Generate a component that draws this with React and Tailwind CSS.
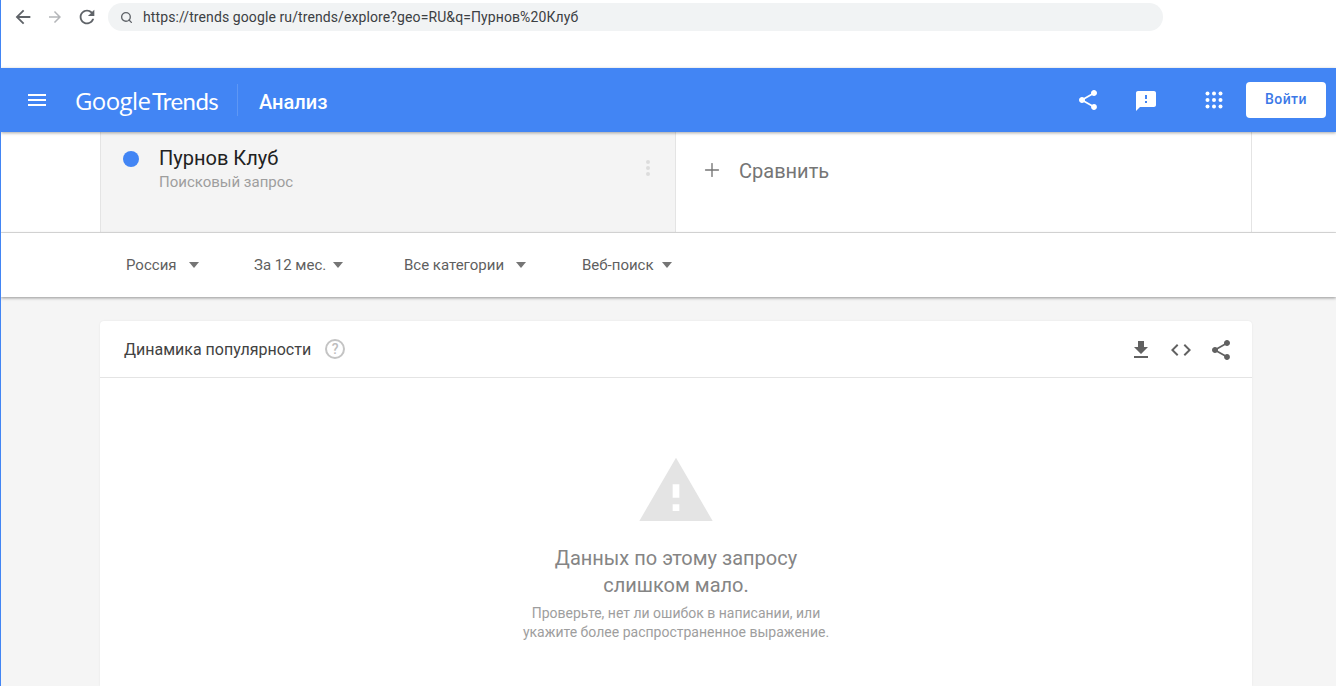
import { Search, Plus } from 'lucide-react'

const FILTERS = [
  { label: 'Россия', width: 'w-[128px]', gap: 'gap-[12px]' },
  { label: 'За 12 мес.', width: 'w-[150px]', gap: 'gap-[7px]' },
  { label: 'Все категории', width: 'w-[178px]', gap: 'gap-[12px]' },
  { label: 'Веб-поиск', width: 'w-[100px]', gap: 'gap-[8px]' },
]

function ShareIcon({ className }) {
  return (
    <svg viewBox="0 0 24 24" className={className} fill="currentColor">
      <path d="M18 16.08c-.76 0-1.44.3-1.96.77L8.91 12.7c.05-.23.09-.46.09-.7s-.04-.47-.09-.7l7.05-4.11c.54.5 1.25.81 2.04.81 1.66 0 3-1.34 3-3s-1.34-3-3-3-3 1.34-3 3c0 .24.04.47.09.7L8.04 9.81C7.5 9.31 6.79 9 6 9c-1.66 0-3 1.34-3 3s1.34 3 3 3c.79 0 1.5-.31 2.04-.81l7.12 4.16c-.05.21-.08.43-.08.65 0 1.61 1.31 2.92 2.92 2.92s2.92-1.31 2.92-2.92-1.31-2.92-2.92-2.92z" />
    </svg>
  )
}

function Caret() {
  return <span className="w-0 h-0 border-x-[5.5px] border-x-transparent border-t-[6px] border-t-[#757575]" />
}

function BrowserBar() {
  return (
    <div className="h-[68px] bg-white pl-[11px] pt-[3px] pr-[173px]">
      <div className="h-[28px] flex items-center">
        <svg viewBox="0 0 24 24" className="w-[22px] h-[22px] text-[#5f6368]" fill="currentColor">
          <path d="M20 11H7.83l5.59-5.59L12 4l-8 8 8 8 1.41-1.41L7.83 13H20v-2z" />
        </svg>
        <svg viewBox="0 0 24 24" className="ml-[12px] w-[18px] h-[18px] text-[#b4b6b9]" fill="currentColor">
          <path d="M12 4l-1.41 1.41L16.17 11H4v2h12.17l-5.58 5.59L12 20l8-8z" />
        </svg>
        <svg viewBox="0 0 24 24" className="ml-[12px] w-[22px] h-[22px] text-[#5f6368]" fill="currentColor">
          <path d="M17.65 6.35C16.2 4.9 14.21 4 12 4c-4.42 0-7.99 3.58-7.99 8s3.57 8 7.99 8c3.73 0 6.84-2.55 7.73-6h-2.08c-.82 2.33-3.04 4-5.65 4-3.31 0-6-2.69-6-6s2.69-6 6-6c1.66 0 3.14.69 4.22 1.78L13 11h7V4l-2.35 2.35z" />
        </svg>
        <div className="ml-[10px] flex-1 h-[28px] rounded-full bg-[#f1f3f4] flex items-center pl-[12px]">
          <Search size={13} strokeWidth={2.5} className="text-[#5f6368]" />
          <span className="ml-[10px] text-[14px] text-[#3c4043] tracking-[0.1px]">
            https://trends google ru/trends/explore?geo=RU&amp;q=Пурнов%20Клуб
          </span>
        </div>
      </div>
    </div>
  )
}

function Header() {
  return (
    <header className="relative z-10 h-[64px] bg-[#4285f4] text-white flex items-center pl-[24px] pr-[10px] shadow-[0_1px_3px_rgba(0,0,0,0.35)]">
      <svg viewBox="0 0 24 24" className="w-[24px] h-[24px]" fill="currentColor">
        <path d="M3 18h18v-2H3v2zm0-5h18v-2H3v2zm0-7v2h18V6H3z" />
      </svg>
      <span className="ml-[26px] pt-[2px] text-[24px] leading-none tracking-[-0.025em] font-['Open_Sans',sans-serif] font-normal">
        Google <span className="ml-[-4px] font-['Lato',sans-serif] font-normal">Trends</span>
      </span>
      <div className="ml-[19px] w-px h-[32px] bg-white/15" />
      <span className="ml-[21px] pt-[4px] text-[20px] font-medium">Анализ</span>
      <ShareIcon className="ml-auto w-[24px] h-[24px]" />
      <svg viewBox="0 0 24 24" className="ml-[34px] mt-[1px] w-[24px] h-[24px]" fill="currentColor">
        <path d="M20 2H4c-1.1 0-2 .9-2 2v18l4-4h14c1.1 0 2-.9 2-2V4c0-1.1-.9-2-2-2zm-7 12h-2v-2h2v2zm0-4h-2V6h2v4z" />
      </svg>
      <svg viewBox="0 0 24 24" className="ml-[44px] w-[24px] h-[24px]" fill="currentColor">
        <circle cx="5.5" cy="5.5" r="2" />
        <circle cx="12" cy="5.5" r="2" />
        <circle cx="18.5" cy="5.5" r="2" />
        <circle cx="5.5" cy="12" r="2" />
        <circle cx="12" cy="12" r="2" />
        <circle cx="18.5" cy="12" r="2" />
        <circle cx="5.5" cy="18.5" r="2" />
        <circle cx="12" cy="18.5" r="2" />
        <circle cx="18.5" cy="18.5" r="2" />
      </svg>
      <button className="ml-[20px] w-[80px] h-[36px] pb-[2px] rounded-[4px] bg-white text-[#3b78e7] text-[14px] font-medium tracking-[0.03em]">
        Войти
      </button>
    </header>
  )
}

function CompareRow() {
  return (
    <div className="h-[101px] bg-white border-b border-[#e0e0e0] flex pl-[99px]">
      <div className="w-[576px] bg-[#f4f4f4] border-x border-[#e4e4e4] flex items-start pl-[22px] pr-[25px]">
        <span className="mt-[19px] w-[16px] h-[16px] rounded-full bg-[#4285f4]" />
        <div className="ml-[20px] mt-[13px] flex-1">
          <div className="text-[20px] leading-[26px] text-[#212121]">Пурнов Клуб</div>
          <div className="mt-[1px] text-[15px] leading-[20px] text-[#9e9e9e]">Поисковый запрос</div>
        </div>
        <div className="mt-[28px] flex flex-col gap-[2px]">
          <span className="w-[4px] h-[4px] rounded-full bg-[#dcdcdc]" />
          <span className="w-[4px] h-[4px] rounded-full bg-[#dcdcdc]" />
          <span className="w-[4px] h-[4px] rounded-full bg-[#dcdcdc]" />
        </div>
      </div>
      <div className="w-[576px] border-r border-[#e4e4e4] flex items-start pl-[25px] pt-[27px] text-[#757575]">
        <Plus size={22} strokeWidth={1.5} />
        <span className="ml-[16px] mt-[-1px] text-[20px] leading-[27px]">Сравнить</span>
      </div>
    </div>
  )
}

function FilterRow() {
  return (
    <div className="relative h-[64px] bg-white flex items-center pl-[125px] shadow-[0_1px_3px_rgba(0,0,0,0.4)]">
      {FILTERS.map((f) => (
        <div key={f.label} className={`${f.width} ${f.gap} flex items-center text-[15px] text-[#5f5f5f]`}>
          <span>{f.label}</span>
          <Caret />
        </div>
      ))}
    </div>
  )
}

function InterestCard() {
  return (
    <div className="mt-[24px] mx-[99px] w-[1152px] flex-1 bg-white rounded-t-[4px] shadow-[0_0_2px_rgba(0,0,0,0.08)]">
      <div className="h-[57px] border-b border-[#e4e4e4] flex items-center pl-[24px] pr-[19px]">
        <span className="pt-[2px] text-[16px] text-[#424242]">Динамика популярности</span>
        <span className="ml-[14px] w-[20px] h-[20px] rounded-full border-2 border-[#c4c4c4] text-[#bdbdbd] text-[14px] font-medium flex items-center justify-center">
          ?
        </span>
        <svg viewBox="0 0 24 24" className="ml-auto mt-[1px] w-[24px] h-[24px] text-[#616161]" fill="currentColor">
          <path d="M19 9h-4V3H9v6H5l7 7 7-7zM5 18v2h14v-2H5z" />
        </svg>
        <svg viewBox="0 0 24 24" className="ml-[16px] mt-[1px] w-[24px] h-[24px] text-[#616161]" fill="currentColor">
          <path d="M9.4 16.6 4.8 12l4.6-4.6L8 6l-6 6 6 6 1.4-1.4zm5.2 0 4.6-4.6-4.6-4.6L16 6l6 6-6 6-1.4-1.4z" />
        </svg>
        <ShareIcon className="ml-[16px] mt-[1px] w-[24px] h-[24px] text-[#616161]" />
      </div>
      <div className="flex flex-col items-center pt-[73px] text-center">
        <svg viewBox="0 0 24 24" className="w-[80px] h-[80px] text-[#e4e4e4]" fill="currentColor">
          <path d="M1 21h22L12 2 1 21zm12-3h-2v-2h2v2zm0-4h-2v-4h2v4z" />
        </svg>
        <div className="mt-[14px] text-[20px] leading-[27px] text-[#858585]">
          Данных по этому запросу
          <br />
          слишком мало.
        </div>
        <div className="mt-[5px] text-[14px] leading-[19px] text-[#9e9e9e]">
          Проверьте, нет ли ошибок в написании, или
          <br />
          укажите более распространенное выражение.
        </div>
      </div>
    </div>
  )
}

export default function App() {
  return (
    <div className="h-[686px] w-[1336px] overflow-hidden border-l border-[#4285f4] bg-[#f5f5f5] flex flex-col font-['Roboto',sans-serif]">
      <BrowserBar />
      <Header />
      <CompareRow />
      <FilterRow />
      <InterestCard />
    </div>
  )
}
